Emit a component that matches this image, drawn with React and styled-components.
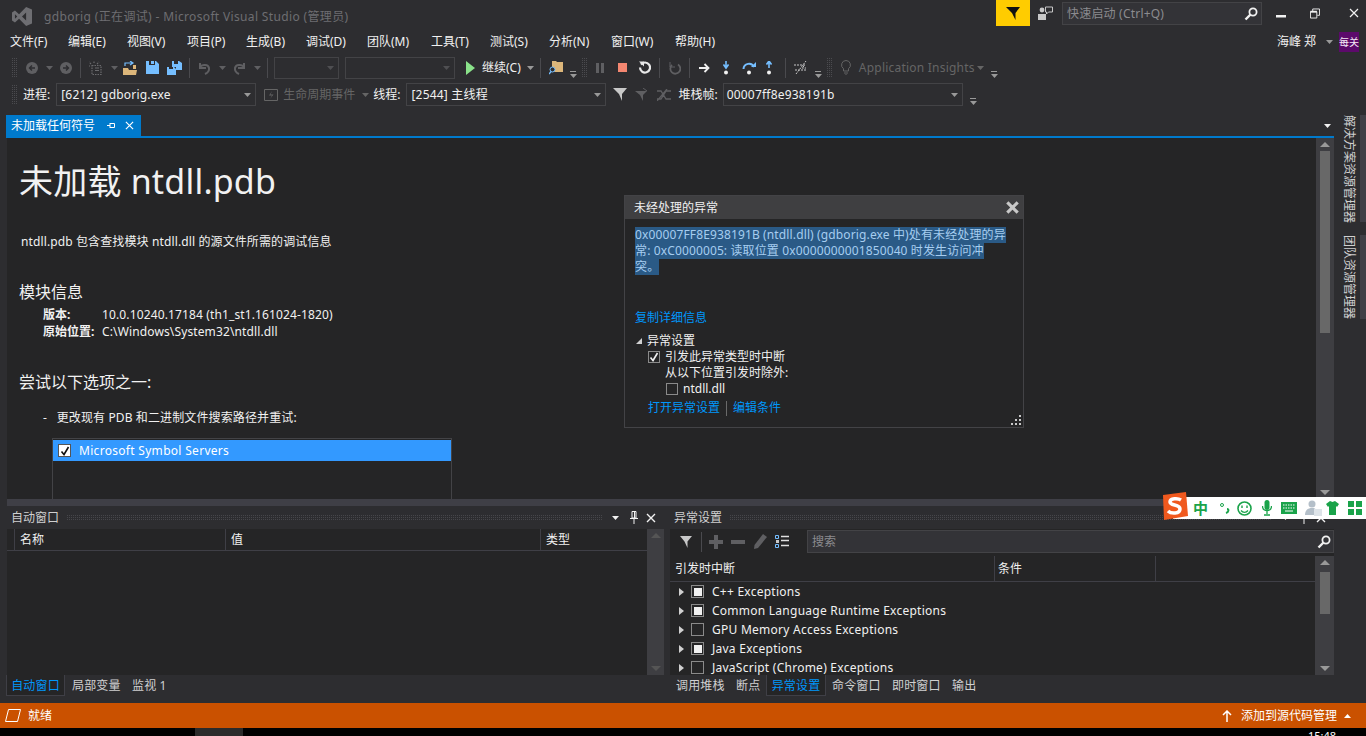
import React from 'react';
import styled, { createGlobalStyle } from 'styled-components';

const FONT = '"Noto Sans", "Noto Sans CJK SC", sans-serif';

const Global = createGlobalStyle`
  html, body { margin: 0; padding: 0; background: #000; }
  * { box-sizing: border-box; }
`;

const Root = styled.div`
  position: relative; width: 1366px; height: 736px; overflow: hidden;
  display: flex; flex-direction: column;
  background: #2d2d30; color: #f1f1f1;
  font: 12px/16px ${FONT};
`;

/* title bar */
const TitleBar = styled.div`display: flex; align-items: flex-start; height: 30px; flex: none;`;
const Logo = styled.svg`margin: 7px 0 0 12px; flex: none;`;
const TitleText = styled.div`margin: 8px 0 0 12px; width: 952px; font-size: 12px; line-height: 18px; letter-spacing: .35px; color: #6e6e72; white-space: nowrap;`;
const FilterBox = styled.div`width: 34px; height: 26px; background: #ffcc00; display: flex; align-items: center; justify-content: center; flex: none;`;
const QuickLaunch = styled.div`
  width: 200px; height: 23px; margin: 2px 0 0 9px; border: 1px solid #434346; background: #333337;
  display: flex; align-items: center; justify-content: space-between; padding: 1px 3px 0 4px; color: #8b8b8f; font-size: 12px; letter-spacing: .2px;
`;
const WinBtn = styled.div`width: ${p => p.$w}px; margin-left: ${p => p.$ml}px; height: 26px; display: flex; align-items: center; justify-content: center; flex: none;`;

/* menu */
const MenuBar = styled.div`display: flex; align-items: center; height: 24px; flex: none; padding-left: 10px;`;
const MenuItem = styled.div`width: ${p => p.$w}px; font-size: 12px; color: #f1f1f1; white-space: nowrap; flex: none;`;
const UserName = styled.div`margin-left: ${p => p.$ml}px; font-size: 12px; white-space: nowrap; width: 43px;`;
const Avatar = styled.div`
  margin-left: 6px; width: 20px; height: 20px; background: #5c0a6b; color: #f4e9f6; font-size: 10px; line-height: 20px;
  letter-spacing: 0; white-space: nowrap; overflow: hidden; flex: none;
`;

/* toolbars */
const Toolbar = styled.div`display: flex; align-items: center; height: 27px; flex: none; padding-left: 12px; white-space: nowrap;`;
const Grip = styled.div`
  width: 5px; height: 20px; flex: none; margin-left: ${p => p.$ml || 0}px;
  background-image: radial-gradient(circle at 0.5px 0.5px, #4b4b4f 0.7px, transparent 0.8px);
  background-size: 2px 2px;
`;
const Sep = styled.div`width: 1px; height: 20px; background: #4a4a4e; flex: none; margin-left: ${p => p.$ml}px;`;
const Tool = styled.div`display: flex; align-items: center; flex: none; margin-left: ${p => p.$ml || 0}px;`;
const Combo = styled.div`
  width: ${p => p.$w}px; height: ${p => p.$h || 23}px; margin-left: ${p => p.$ml}px; flex: none;
  border: 1px solid #434346; background: #2d2d30; display: flex; align-items: center; justify-content: space-between;
  padding: 0 4px 0 ${p => p.$pl || 4}px; color: #f1f1f1; font-size: 12px; letter-spacing: .2px;
`;
const ToolLabel = styled.span`margin-left: ${p => p.$ml || 0}px; flex: none; font-size: 12px; color: ${p => p.$dim ? '#656565' : '#f1f1f1'};`;
const InsightsLabel = styled(ToolLabel)`width: 112px; letter-spacing: .22px;`;

/* workspace */
const Workspace = styled.div`flex: 1; display: flex; min-height: 0;`;
const Center = styled.div`width: 1334px; flex: none; padding: 7px 0 7px 6px; display: flex; flex-direction: column;`;
const DocTabs = styled.div`height: 21px; flex: none; display: flex; justify-content: space-between; align-items: center; padding-right: 3px;`;
const DocTab = styled.div`
  width: 135px; height: 21px; background: #007acc; color: #fff; display: flex; align-items: center; padding-left: 5px; font-size: 12px;
`;
const TabRule = styled.div`height: 2px; background: #007acc; flex: none;`;
const DocRow = styled.div`height: 361px; flex: none; display: flex;`;
const Doc = styled.div`flex: 1; margin-left: 1px; background: #252526; overflow: hidden; padding: 0 0 0 12px; position: relative;`;
const Heading = styled.h1`margin: 20px 0 0; font: 400 34px/46px ${FONT}; letter-spacing: .2px; color: #f1f1f1;`;
const Para = styled.p`margin: 0; padding-left: ${p => p.$pl || 0}px; margin-top: ${p => p.$mt}px; font-size: 12px; line-height: 17px; letter-spacing: .12px; color: #f1f1f1;`;
const SubHead = styled.h2`margin: ${p => p.$mt}px 0 0; font: 400 16px/22px ${FONT}; color: #f1f1f1;`;
const InfoRow = styled.div`display: flex; padding-left: 24px; line-height: 17px; letter-spacing: .13px;`;
const InfoKey = styled.div`width: 59px; font-weight: 700; letter-spacing: 0;`;
const ListBox = styled.div`margin: 12px 0 0 33px; width: 400px; height: 80px; border: 1px solid #434346; padding-top: 1px;`;
const ListRow = styled.div`height: 21px; background: #3399ff; color: #fff; display: flex; align-items: center; padding-left: 5px; gap: 8px; letter-spacing: .3px;`;
const Scrollbar = styled.div`
  width: ${p => p.$w || 18}px; flex: none; background: #3e3e42; display: flex; flex-direction: column; align-items: center; justify-content: space-between;
  padding: 4px 0;
`;
const ScrollTrack = styled.div`flex: 1; width: 100%; display: flex; justify-content: center; padding-top: ${p => p.$pt}px;`;
const Thumb = styled.div`width: 10px; height: ${p => p.$h}px; background: #686868;`;
const ScrollArrow = styled.div`
  width: 0; height: 0; border-left: 5px solid transparent; border-right: 5px solid transparent; flex: none;
  ${p => p.$down ? `border-top: 5px solid ${p.$c || '#999'};` : `border-bottom: 5px solid ${p.$c || '#999'};`}
`;
const Splitter = styled.div`height: 7px; background: #3f3f46; flex: none; margin-left: 1px;`;
const Lower = styled.div`flex: 1; display: flex; min-height: 0;`;
const PanelCol = styled.div`width: ${p => p.$w}px; margin-left: ${p => p.$ml}px; flex: none; display: flex; flex-direction: column;`;
const Panel = styled.div`height: 169px; flex: none; display: flex; flex-direction: column; background: #252526; overflow: hidden;`;
const PanelTitle = styled.div`height: 23px; flex: none; background: #2d2d30; display: flex; align-items: center; padding: 0 8px 0 4px; font-size: 12px; color: #d0d0d0;`;
const TitleDots = styled.div`
  flex: 1; height: 5px; margin: 0 10px 0 8px;
  background-image: radial-gradient(circle at 0.5px 0.5px, #46464a 0.7px, transparent 0.8px);
  background-size: 2px 2px;
`;
const PanelBody = styled.div`flex: 1; display: flex; min-height: 0; padding-top: ${p => p.$pt || 0}px;`;
const GridArea = styled.div`flex: 1; min-width: 0; display: flex; flex-direction: column; overflow: hidden;`;
const HeadRow = styled.div`height: ${p => p.$h}px; flex: none; display: flex; border-bottom: 1px solid #3f3f46; align-items: stretch;`;
const HeadCell = styled.div`
  width: ${p => p.$w}px; flex: ${p => p.$w ? 'none' : 1}; padding-left: ${p => p.$pl || 5}px; border-right: ${p => p.$last ? 'none' : '1px solid #3f3f46'};
  display: flex; align-items: center; color: #f1f1f1; font-size: 12px;
`;
const PanelTabs = styled.div`height: 21px; flex: none; display: flex; align-items: stretch; padding-left: ${p => p.$pl || 0}px;`;
const PanelTab = styled.div`
  width: ${p => p.$w}px; flex: none; display: flex; align-items: center; justify-content: ${p => p.$active ? 'center' : 'flex-start'}; font-size: 12px; white-space: nowrap;
  color: ${p => p.$active ? '#0097fb' : '#d0d0d0'}; padding-top: 1px; letter-spacing: .15px;
  margin-left: ${p => p.$ml || 0}px; padding-left: ${p => p.$pl || 0}px;
  ${p => p.$active ? 'background: #252526; border: 1px solid #3f3f46; border-top: none;' : ''}
`;
const ExcTool = styled.div`height: 25px; flex: none; display: flex; align-items: center; padding-left: 10px;`;
const SearchBox = styled.div`
  margin-left: 18px; flex: 1; height: 23px; background: #333337; border: 1px solid #434346; display: flex; align-items: center; justify-content: space-between;
  padding: 0 2px 0 4px; color: #8b8b8f; font-size: 12px;
`;
const ExcRow = styled.div`height: 19px; flex: none; display: flex; align-items: center; padding-left: 9px; color: #f1f1f1; white-space: nowrap;`;
const ExcText = styled.span`margin-left: 8px; letter-spacing: .25px;`;
const Tri = styled.div`
  width: 0; height: 0; flex: none; border-top: 4px solid transparent; border-bottom: 4px solid transparent; border-left: 5px solid #d0d0d0; margin-right: 7px;
`;
const Check = styled.div`
  width: ${p => p.$s || 12}px; height: ${p => p.$s || 12}px; flex: none; border: 1px solid ${p => p.$c || '#8a8a8a'}; background: ${p => p.$bg || 'transparent'};
  display: flex; align-items: center; justify-content: center; margin-left: ${p => p.$ml || 0}px; margin-right: ${p => p.$mr || 0}px;
`;
const Dot = styled.div`width: 8px; height: 8px; background: #f1f1f1;`;

/* side rail */
const SideRail = styled.div`flex: 1; padding-top: 7px; display: flex; flex-direction: column; gap: 13px;`;
const SideTab = styled.div`
  height: ${p => p.$h}px; display: flex; justify-content: space-between; padding-left: 8px; color: #d0d0d0;
`;
const SideLabel = styled.div`writing-mode: vertical-rl; text-orientation: sideways; font-size: 12px; line-height: 14px; white-space: nowrap; width: 14px;`;
const SideStripe = styled.div`width: 6px; background: #3f3f46;`;

/* status */
const StatusBar = styled.div`height: 25px; flex: none; background: #ca5100; color: #fff; display: flex; align-items: center; padding-left: 5px; font-size: 12px;`;
const StatusText = styled.span`margin-left: ${p => p.$ml}px; white-space: nowrap;`;
const Taskbar = styled.div`height: 8px; flex: none; background: #000; position: relative; overflow: hidden; display: flex;`;
const TaskBtn = styled.div`width: 48px; margin-left: 195px; background: #2b2b2b;`;
const Clock = styled.div`margin-left: 1065px; color: #fff; font-size: 11px; line-height: 16px; white-space: nowrap;`;

/* dialog */
const Dialog = styled.div`
  position: absolute; left: 624px; top: 195px; width: 400px; height: 233px; background: #252526; border: 1px solid #434346;
  display: flex; flex-direction: column;
`;
const DialogHead = styled.div`height: 23px; flex: none; background: #3f3f41; display: flex; align-items: center; justify-content: space-between; padding: 0 4px 0 9px; color: #f1f1f1;`;
const DialogBody = styled.div`flex: 1; padding: 8px 0 0 10px; position: relative;`;
const Sel = styled.div`background: #2a5a86; color: #a6cdf0; width: fit-content; height: 16px; line-height: 16px; white-space: nowrap; font-size: 12px; letter-spacing: .13px;`;
const Link = styled.span`color: #0097fb; white-space: nowrap;`;
const DLine = styled.div`display: flex; align-items: center; height: 16px; margin-top: ${p => p.$mt || 0}px; padding-left: ${p => p.$pl || 0}px; white-space: nowrap; color: #f1f1f1;`;
const Expander = styled.div`width: 0; height: 0; border-left: 6px solid transparent; border-bottom: 6px solid #d0d0d0; margin: 0 5px 0 1px; flex: none;`;
const Divider = styled.span`width: 1px; height: 15px; background: #6a6a6a; margin: 0 6px 0 6px; flex: none;`;
const ResizeGrip = styled.svg`position: absolute; right: 2px; bottom: 2px;`;

/* ime */
const Ime = styled.div`
  position: absolute; left: 1173px; top: 497px; width: 193px; height: 22px; background: #fff; display: flex; align-items: center;
`;
const ImeLogo = styled.svg`position: absolute; left: -13px; top: -5px;`;
const ImeSlot = styled.div`margin-left: ${p => p.$ml}px; display: flex; align-items: center; flex: none; color: #1aa34a; font-weight: 700; font-size: 15px; line-height: 16px;`;

/* drawing helpers */
const Caret = ({ c = '#999', ml = 0 }) => (
  <Tool $ml={ml}><svg width="7" height="4" viewBox="0 0 7 4"><path d="M0 0h7L3.5 4z" fill={c} /></svg></Tool>
);
const OverflowTool = styled(Tool)`align-self: flex-end; margin-bottom: 3px;`;
const Overflow = ({ ml }) => (
  <OverflowTool $ml={ml}><svg width="7" height="7" viewBox="0 0 7 7"><path d="M0 0h6v1H0zM0 3h7L3.5 7z" fill="#999" /></svg></OverflowTool>
);
const X = ({ s = 9, c = '#d0d0d0', w = 1.5 }) => (
  <svg width={s} height={s} viewBox="0 0 10 10"><path d="M1 1l8 8M9 1l-8 8" stroke={c} strokeWidth={w} fill="none" /></svg>
);
const Magnifier = ({ c = '#f1f1f1' }) => (
  <svg width="14" height="14" viewBox="0 0 14 14"><circle cx="9" cy="5" r="3.6" fill="none" stroke={c} strokeWidth="1.8" /><path d="M6.5 7.5L1.5 12.5" stroke={c} strokeWidth="2.4" /></svg>
);
const Tick = ({ c = '#f1f1f1', s = 10 }) => (
  <svg width={s} height={s} viewBox="0 0 10 10"><path d="M1.5 5.5L4 8.5 8.5 1" fill="none" stroke={c} strokeWidth="1.6" /></svg>
);
const Ico = ({ w, h = 14, ml, vb, children }) => (
  <Tool $ml={ml}><svg width={w} height={h} viewBox={vb || `0 0 ${w} ${h}`}>{children}</svg></Tool>
);
const PinDown = () => (
  <svg width="8" height="13" viewBox="0 0 8 13"><path d="M2 .5h4v6.500H2zM0 7.500h8M4 7.500V13M4.500 1v6" stroke="#f1f1f1" fill="none" /></svg>
);

const MENU = [['文件(F)', 58], ['编辑(E)', 59], ['视图(V)', 60], ['项目(P)', 59], ['生成(B)', 60], ['调试(D)', 61], ['团队(M)', 64], ['工具(T)', 59], ['测试(S)', 59], ['分析(N)', 62], ['窗口(W)', 64], ['帮助(H)', 60]];
const EXC = [['C++ Exceptions', 1], ['Common Language Runtime Exceptions', 1], ['GPU Memory Access Exceptions', 0], ['Java Exceptions', 1], ['JavaScript (Chrome) Exceptions', 0]];

export default function App() {
  return (
    <Root>
      <Global />
      <TitleBar>
        <Logo width="20" height="19" viewBox="0 0 34 32">
          <path fillRule="evenodd" fill="#6e6e72" d="M24 0L34 4V28L24 32L12 20L5 26L0 23V9L5 6L12 12ZM24 9L17 16L24 23ZM5 12V20L9 16Z" />
        </Logo>
        <TitleText>gdborig (正在调试) - Microsoft Visual Studio (管理员)</TitleText>
        <FilterBox>
          <svg width="15" height="15" viewBox="0 0 15 15"><path d="M0 1H14L9.5 7V14L6 7Z" fill="#111" /></svg>
        </FilterBox>
        <WinBtn $w={16} $ml={7}>
          <svg width="15" height="14" viewBox="0 0 15 14"><circle cx="4" cy="4" r="2.4" fill="#c8c8c8" /><path d="M0 8h8v6H0z" fill="#c8c8c8" /><path d="M7.5 1h7v5h-4l-2 2V6h-1z" fill="none" stroke="#c8c8c8" /></svg>
        </WinBtn>
        <QuickLaunch>
          快速启动 (Ctrl+Q)
          <Magnifier />
        </QuickLaunch>
        <WinBtn $w={10} $ml={14}><svg width="10" height="10" viewBox="0 0 10 10"><path d="M0 7h10v2.5H0z" fill="#f1f1f1" /></svg></WinBtn>
        <WinBtn $w={10} $ml={24}><svg width="11" height="11" viewBox="0 0 11 11"><path d="M.5 3.5h7v7h-7zM3 3V.5h7.5v7H8" fill="none" stroke="#f1f1f1" /><path d="M.5 3.5h7" stroke="#f1f1f1" strokeWidth="2" /></svg></WinBtn>
        <WinBtn $w={10} $ml={29}><X s={10} c="#f1f1f1" w={1.2} /></WinBtn>
      </TitleBar>

      <MenuBar>
        {MENU.map(([t, w]) => <MenuItem key={t} $w={w}>{t}</MenuItem>)}
        <UserName $ml={542}>海峰 郑</UserName>
        <Caret ml={6} />
        <Avatar>每关</Avatar>
      </MenuBar>

      <Toolbar>
        <Grip />
        <Ico w={12} ml={9}><circle cx="6" cy="7" r="6" fill="#5f5f62" /><path d="M9 7H4M6 4.5L3.5 7 6 9.500" stroke="#2d2d30" strokeWidth="1.4" fill="none" /></Ico>
        <Caret c="#5f5f62" ml={8} />
        <Ico w={12} ml={7}><circle cx="6" cy="7" r="6" fill="#5f5f62" /><path d="M3 7h5M6 4.500L8.500 7 6 9.500" stroke="#2d2d30" strokeWidth="1.4" fill="none" /></Ico>
        <Sep $ml={8} />
        <Ico w={14} ml={8}><path d="M3 4.500h9v9H3zM5 2V0M2 3L0 1M8 3l2-2M1 5H0" stroke="#6a6a6d" fill="none" strokeWidth="1.200" strokeDasharray="1.5 1" /><path d="M6 7h4M6 9.500h4" stroke="#6a6a6d" /></Ico>
        <Caret c="#5f5f62" ml={8} />
        <Ico w={15} ml={5}><path d="M0 7h5l1 2h8l-1 5H0z" fill="#dcb67a" /><path d="M2 5V2h7M7 0l3 2-3 2" stroke="#75beff" strokeWidth="1.200" fill="none" /><path d="M10 4h3v4h-3z" fill="#dcb67a" /></Ico>
        <Ico w={13} ml={8}><path fillRule="evenodd" d="M0 0h3v4h6V0h1l3 3v10H0z" fill="#75beff" /><path d="M5 0h3v3H5z" fill="#75beff" /></Ico>
        <Ico w={15} ml={8}><path d="M5 0h2v3h4V0h1l3 2v7H9V6H5zM0 6h2v2h4V6h1l2 2v6H0z" fill="#75beff" /></Ico>
        <Sep $ml={7} />
        <Ico w={13} ml={8}><path d="M2 2v5h6M2 7c0-3 8-5 9 0 .5 3-2 5-4 6" stroke="#5f5f62" strokeWidth="2" fill="none" /></Ico>
        <Caret c="#5f5f62" ml={8} />
        <Ico w={13} ml={7}><path d="M11 2v5H5M11 7c0-3-8-5-9 0-.5 3 2 5 4 6" stroke="#5f5f62" strokeWidth="2" fill="none" /></Ico>
        <Caret c="#5f5f62" ml={8} />
        <Sep $ml={6} />
        <Combo $w={65} $ml={6} $h={22}><span /><Caret c="#4f4f52" /></Combo>
        <Combo $w={110} $ml={6} $h={22}><span /><Caret c="#4f4f52" /></Combo>
        <Ico w={9} h={14} ml={11}><path d="M0 0l9 7-9 7z" fill="#8ae28a" /></Ico>
        <ToolLabel $ml={7}>继续(C)</ToolLabel>
        <Caret ml={6} />
        <Sep $ml={6} />
        <Ico w={14} h={15} ml={8}><path d="M3 1h4l1 1h6v10H3z" fill="#dcb67a" /><circle cx="3.500" cy="9.500" r="2.500" fill="#2d2d30" stroke="#75beff" /><path d="M2 11.500L0 14" stroke="#75beff" strokeWidth="1.400" /></Ico>
        <Overflow ml={7} />
        <Grip $ml={5} />
        <Ico w={8} h={10} ml={9}><path d="M0 0h3v10H0zM5 0h3v10H5z" fill="#5f5f62" /></Ico>
        <Ico w={9} h={9} ml={14}><rect width="9" height="9" fill="#f48771" /></Ico>
        <Ico w={13} h={14} ml={11}><path d="M3 3.500a5 5 0 1 1-1 3" stroke="#e8e8e8" strokeWidth="2.200" fill="none" /><path d="M1 .5h5v5z" fill="#e8e8e8" /></Ico>
        <Sep $ml={8} />
        <Ico w={13} h={14} ml={8}><path d="M10 3.500a5 5 0 1 1-6 .5" stroke="#5f5f62" strokeWidth="1.800" fill="none" /><path d="M2 1v5h5" stroke="#5f5f62" fill="none" /></Ico>
        <Sep $ml={8} />
        <Ico w={11} h={10} ml={9}><path d="M0 5h9M5.500 1L9.500 5 5.500 9" stroke="#f1f1f1" strokeWidth="1.800" fill="none" /></Ico>
        <Ico w={6} h={14} ml={13}><path d="M3 0v6M.5 3.500L3 7l2.500-3.500" stroke="#75beff" strokeWidth="1.600" fill="none" /><circle cx="3" cy="11.500" r="2" fill="#f1f1f1" /></Ico>
        <Ico w={14} h={14} ml={13}><path d="M1.500 8a5.500 5.500 0 0 1 10.500-2" stroke="#75beff" strokeWidth="2" fill="none" /><path d="M9 6h5V1z" fill="#75beff" /><circle cx="7" cy="11.500" r="2" fill="#f1f1f1" /></Ico>
        <Ico w={6} h={14} ml={10}><path d="M3 7V1M.5 3.500L3 0l2.500 3.500" stroke="#75beff" strokeWidth="1.600" fill="none" /><circle cx="3" cy="11.500" r="2" fill="#f1f1f1" /></Ico>
        <Sep $ml={13} />
        <Ico w={14} h={15} ml={7}><path d="M1 5h11l-3 3h4M2 10h11M3 14L13 1" stroke="#c8c8c8" fill="none" strokeDasharray="2 1" /></Ico>
        <Overflow ml={8} />
        <Grip $ml={5} />
        <Ico w={10} h={15} ml={9}><path d="M5 .5a4.500 4.500 0 0 1 2.500 8.200V11h-5V8.700A4.500 4.500 0 0 1 5 .5zM3 13h4M4 15h2" stroke="#656565" fill="none" /></Ico>
        <InsightsLabel $ml={8} $dim>Application Insights</InsightsLabel>
        <Caret c="#656565" ml={6} />
        <Overflow ml={7} />
      </Toolbar>

      <Toolbar>
        <Grip />
        <ToolLabel $ml={6}>进程:</ToolLabel>
        <Combo $w={200} $ml={6}>[6212] gdborig.exe<Caret /></Combo>
        <Ico w={14} h={12} ml={8} ><path d="M.5.5h13v11H.5z" fill="none" stroke="#656565" /><path d="M8 2L5 6.500h3L6 10l3.500-4.500h-3z" fill="#656565" /></Ico>
        <ToolLabel $ml={5} $dim>生命周期事件</ToolLabel>
        <Caret c="#656565" ml={7} />
        <ToolLabel $ml={4}>线程:</ToolLabel>
        <Combo $w={200} $ml={6}>[2544] 主线程<Caret /></Combo>
        <Ico w={14} h={15} ml={7}><path d="M0 1h14L9 7v7L6 7z" fill="#c8c8c8" /></Ico>
        <Ico w={13} h={13} ml={8}><path d="M0 3h12L8 7v6L5 7z" fill="#5f5f62" /><path d="M8 0l4 3" stroke="#5f5f62" /></Ico>
        <Ico w={14} h={12} ml={9}><path d="M0 2h4l5 8h5M0 10h4l5-8h5M10 0L0 12" stroke="#5f5f62" strokeWidth="1.300" fill="none" /></Ico>
        <ToolLabel $ml={7}>堆栈帧:</ToolLabel>
        <Combo $w={240} $ml={5} $pl={3}>00007ff8e938191b<Caret /></Combo>
        <Overflow ml={7} />
      </Toolbar>

      <Workspace>
        <Center>
          <DocTabs>
            <DocTab>
              未加载任何符号
              <Tool $ml={12}><svg width="8" height="7" viewBox="0 0 8 7"><path d="M0 3.500h3M3 1v5M3 1.500h4.500v4H3" stroke="#fff" fill="none" /></svg></Tool>
              <Tool $ml={10}><X s={9} c="#fff" w={1.3} /></Tool>
            </DocTab>
            <Caret c="#f1f1f1" />
          </DocTabs>
          <TabRule />
          <DocRow>
            <Doc>
              <Heading>未加载 ntdll.pdb</Heading>
              <Para $mt={29} $pl={2}>ntdll.pdb 包含查找模块 ntdll.dll 的源文件所需的调试信息</Para>
              <SubHead $mt={31}>模块信息</SubHead>
              <InfoRow style={{ marginTop: 3 }}><InfoKey>版本:</InfoKey>10.0.10240.17184 (th1_st1.161024-1820)</InfoRow>
              <InfoRow><InfoKey>原始位置:</InfoKey>C:\Windows\System32\ntdll.dll</InfoRow>
              <SubHead $mt={31}>尝试以下选项之一:</SubHead>
              <Para $mt={16} $pl={24}>-&nbsp;&nbsp; 更改现有 PDB 和二进制文件搜索路径并重试:</Para>
              <ListBox>
                <ListRow>
                  <Check $s={13} $bg="#fff" $c="#555"><Tick c="#111" /></Check>
                  Microsoft Symbol Servers
                </ListRow>
              </ListBox>
            </Doc>
            <Scrollbar>
              <ScrollArrow />
              <ScrollTrack $pt={4}><Thumb $h={182} /></ScrollTrack>
              <ScrollArrow $down />
            </Scrollbar>
          </DocRow>
          <Splitter />
          <Lower>
            <PanelCol $w={657} $ml={1}>
              <Panel>
                <PanelTitle>
                  自动窗口
                  <TitleDots />
                  <Caret c="#f1f1f1" />
                  <Tool $ml={11}><PinDown /></Tool>
                  <Tool $ml={8}><X s={10} c="#f1f1f1" w={1.400} /></Tool>
                </PanelTitle>
                <PanelBody>
                  <GridArea>
                    <HeadRow $h={22}>
                      <HeadCell $w={8} $pl={0} />
                      <HeadCell $w={211} $pl={5}>名称</HeadCell>
                      <HeadCell $w={315} $pl={5}>值</HeadCell>
                      <HeadCell $last>类型</HeadCell>
                    </HeadRow>
                  </GridArea>
                  <Scrollbar $w={17}>
                    <ScrollArrow $c="#555" />
                    <ScrollArrow $down $c="#555" />
                  </Scrollbar>
                </PanelBody>
              </Panel>
              <PanelTabs>
                <PanelTab $active $w={59} $ml={-1}>自动窗口</PanelTab>
                <PanelTab $w={60} $ml={7}>局部变量</PanelTab>
                <PanelTab $w={50}>监视 1</PanelTab>
              </PanelTabs>
            </PanelCol>
            <PanelCol $w={664} $ml={6}>
              <Panel>
                <PanelTitle>
                  异常设置
                  <TitleDots />
                  <Caret c="#f1f1f1" />
                  <Tool $ml={11}><PinDown /></Tool>
                  <Tool $ml={8}><X s={10} c="#f1f1f1" w={1.400} /></Tool>
                </PanelTitle>
                <ExcTool>
                  <Ico w={12} h={13}><path d="M0 1h12L7.500 6.500V13L4.500 6.500z" fill="#c8c8c8" /></Ico>
                  <Sep $ml={9} />
                  <Ico w={14} h={14} ml={7}><path d="M5 0h4v5h5v4H9v5H5V9H0V5h5z" fill="#5f5f62" /></Ico>
                  <Ico w={14} h={4} ml={8}><rect width="14" height="4" fill="#5f5f62" /></Ico>
                  <Ico w={14} h={15} ml={8}><path d="M10 0l4 3L5 14l-4 1 .5-4z" fill="#5f5f62" /></Ico>
                  <Ico w={14} h={13} ml={8}><path d="M.5.5h3v3h-3zM.5 9.500h3v3h-3z" fill="none" stroke="#75beff" /><path d="M6 1.500h8M6 5.500h8M6 10.500h8" stroke="#e0e0e0" strokeWidth="1.500" /><path d="M1 5h3v3H1z" fill="#c8c8c8" /></Ico>
                  <SearchBox>
                    搜索
                    <Magnifier />
                  </SearchBox>
                </ExcTool>
                <PanelBody $pt={2}>
                  <GridArea>
                    <HeadRow $h={26}>
                      <HeadCell $w={325}>引发时中断</HeadCell>
                      <HeadCell $w={161} $pl={3}>条件</HeadCell>
                      <HeadCell $last />
                    </HeadRow>
                    {EXC.map(([t, on]) => (
                      <ExcRow key={t}>
                        <Tri />
                        <Check $s={13}>{on ? <Dot /> : null}</Check>
                        <ExcText>{t}</ExcText>
                      </ExcRow>
                    ))}
                  </GridArea>
                  <Scrollbar $w={19}>
                    <ScrollArrow $c="#999" />
                    <ScrollTrack $pt={7}><Thumb $h={42} /></ScrollTrack>
                    <ScrollArrow $down $c="#999" />
                  </Scrollbar>
                </PanelBody>
              </Panel>
              <PanelTabs $pl={6}>
                <PanelTab $w={60}>调用堆栈</PanelTab>
                <PanelTab $w={30}>断点</PanelTab>
                <PanelTab $active $w={60}>异常设置</PanelTab>
                <PanelTab $w={60} $pl={6}>命令窗口</PanelTab>
                <PanelTab $w={60} $pl={6}>即时窗口</PanelTab>
                <PanelTab $w={40} $pl={6}>输出</PanelTab>
              </PanelTabs>
            </PanelCol>
          </Lower>
        </Center>
        <SideRail>
          <SideTab $h={107}><SideLabel>解决方案资源管理器</SideLabel><SideStripe /></SideTab>
          <SideTab $h={84}><SideLabel>团队资源管理器</SideLabel><SideStripe /></SideTab>
        </SideRail>
      </Workspace>

      <StatusBar>
        <svg width="16" height="13" viewBox="0 0 16 13"><path d="M3.500.5h12l-3 12H.5z" fill="none" stroke="#fff" /></svg>
        <StatusText $ml={7}>就绪</StatusText>
        <Tool $ml={1170}><svg width="10" height="12" viewBox="0 0 10 12"><path d="M5 12V2M1 5l4-4 4 4" stroke="#fff" strokeWidth="1.500" fill="none" /></svg></Tool>
        <StatusText $ml={9}>添加到源代码管理</StatusText>
        <Tool $ml={7}><svg width="7" height="4" viewBox="0 0 7 4"><path d="M0 4h7L3.500 0z" fill="#fff" /></svg></Tool>
      </StatusBar>
      <Taskbar>
        <TaskBtn />
        <Clock>15:48</Clock>
      </Taskbar>

      <Dialog>
        <DialogHead>
          未经处理的异常
          <X s={13} c="#c8c8c8" w={2.400} />
        </DialogHead>
        <DialogBody>
          <Sel>0x00007FF8E938191B (ntdll.dll) (gdborig.exe 中)处有未经处理的异</Sel>
          <Sel>常: 0xC0000005: 读取位置 0x0000000001850040 时发生访问冲</Sel>
          <Sel>突。</Sel>
          <DLine $mt={35}><Link>复制详细信息</Link></DLine>
          <DLine $mt={7}><Expander />异常设置</DLine>
          <DLine $pl={13}>
            <Check $mr={5}><Tick /></Check>
            引发此异常类型时中断
          </DLine>
          <DLine $pl={30}>从以下位置引发时除外:</DLine>
          <DLine $pl={31}><Check $mr={5} />ntdll.dll</DLine>
          <DLine $pl={13} $mt={3}><Link>打开异常设置</Link><Divider /><Link>编辑条件</Link></DLine>
          <ResizeGrip width="11" height="11" viewBox="0 0 11 11">
            <path d="M9 1h2v2H9zM5 5h2v2H5zM9 5h2v2H9zM1 9h2v2H1zM5 9h2v2H5zM9 9h2v2H9z" fill="#c8c8c8" />
          </ResizeGrip>
        </DialogBody>
      </Dialog>

      <Ime>
        <ImeLogo width="28" height="28" viewBox="0 0 28 28">
          <path d="M3 3L26 0l2 24-24 4z" fill="#f0591e" />
          <path d="M21 8c-3-2-11-2-11 2s10 2 10 7-9 5-12 2" stroke="#fff" strokeWidth="3.500" fill="none" />
        </ImeLogo>
        <ImeSlot $ml={20}>中</ImeSlot>
        <ImeSlot $ml={12}><svg width="10" height="12" viewBox="0 0 10 12"><circle cx="2" cy="3" r="1.500" fill="none" stroke="#1aa34a" /><path d="M7 7c2 0 2 3-1 4" stroke="#1aa34a" strokeWidth="2" fill="none" /></svg></ImeSlot>
        <ImeSlot $ml={7}><svg width="15" height="15" viewBox="0 0 15 15"><circle cx="7.500" cy="7.500" r="6.500" fill="none" stroke="#1aa34a" strokeWidth="1.600" /><path d="M5 4.500v2.500M10 4.500v2.500M4 9.500c2 2.500 5 2.500 7 0" stroke="#1aa34a" strokeWidth="1.400" fill="none" /></svg></ImeSlot>
        <ImeSlot $ml={10}><svg width="10" height="16" viewBox="0 0 10 16"><rect x="2.500" width="5" height="10" rx="2.500" fill="#1aa34a" /><path d="M.5 6c0 6 9 6 9 0M5 11v3M2 15h6" stroke="#1aa34a" fill="none" strokeWidth="1.300" /></svg></ImeSlot>
        <ImeSlot $ml={9}><svg width="16" height="12" viewBox="0 0 16 12"><rect width="16" height="12" fill="#1aa34a" /><path d="M2 3h12M2 6h12" stroke="#fff" strokeDasharray="1.500 1" /><path d="M4 9h8" stroke="#fff" /></svg></ImeSlot>
        <ImeSlot $ml={8}><svg width="17" height="16" viewBox="0 0 17 16"><circle cx="7" cy="4" r="3.500" fill="#b4bfc9" /><path d="M0 15c0-6 4-7 7-7s4 1 4 3v4z" fill="#b4bfc9" /><rect x="9" y="9" width="8" height="7" fill="#dde3e8" /></svg></ImeSlot>
        <ImeSlot $ml={4}><svg width="13" height="14" viewBox="0 0 13 14"><path d="M4 0l2.500 1L9 0l4 3-2 3-1-1v9H3V5L2 6 0 3z" fill="#1aa34a" /></svg></ImeSlot>
        <ImeSlot $ml={9}><svg width="14" height="14" viewBox="0 0 14 14"><path d="M0 0h6v6H0zM8 0h6v6H8zM0 8h6v6H0zM8 8h6v6H8z" fill="#1aa34a" /></svg></ImeSlot>
      </Ime>
    </Root>
  );
}
